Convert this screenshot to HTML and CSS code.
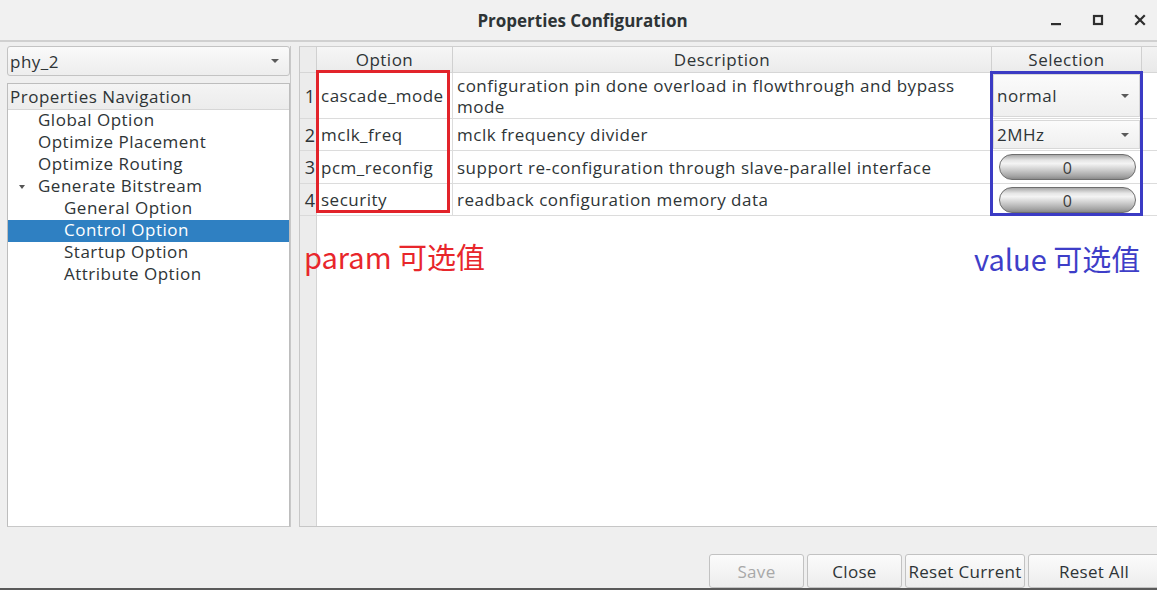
FILE: index.html
```html
<!DOCTYPE html>
<html>
<head>
<meta charset="utf-8">
<link rel="stylesheet" href="styles.css">
</head>
<body>
<div class="window">
  <div class="titlebar">
    <div class="title">Properties Configuration</div>
    <div class="winctrls">
      <svg class="wc" width="14" height="14" viewBox="0 0 14 14"><rect x="2" y="10" width="10" height="2.2" fill="#2e2e2e"/></svg>
      <svg class="wc" width="14" height="14" viewBox="0 0 14 14"><rect x="3" y="3" width="8" height="8" fill="none" stroke="#2e2e2e" stroke-width="2.2"/></svg>
      <svg class="wc" width="14" height="14" viewBox="0 0 14 14"><path d="M3 3 L11 11 M11 3 L3 11" stroke="#2e2e2e" stroke-width="2.2" stroke-linecap="square"/></svg>
    </div>
  </div>

  <div class="main">
    <div class="leftcol">
      <div class="combo top-combo">
        <span>phy_2</span>
        <span class="arrow"></span>
      </div>
      <div class="tree">
        <div class="tree-head">Properties Navigation</div>
        <div class="tree-item l1">Global Option</div>
        <div class="tree-item l1">Optimize Placement</div>
        <div class="tree-item l1">Optimize Routing</div>
        <div class="tree-item l1 expander"><span class="tri"></span>Generate Bitstream</div>
        <div class="tree-item l2">General Option</div>
        <div class="tree-item l2 selected">Control Option</div>
        <div class="tree-item l2">Startup Option</div>
        <div class="tree-item l2">Attribute Option</div>
      </div>
    </div>

    <div class="splitter"></div>

    <div class="rightcol">
      <div class="grid">
        <div class="hcell corner"></div>
        <div class="hcell">Option</div>
        <div class="hcell">Description</div>
        <div class="hcell">Selection</div>
        <div class="hcell filler"></div>

        <div class="rnum r1">1</div>
        <div class="cell opt r1">cascade_mode</div>
        <div class="cell r1 desc wrap">configuration pin done overload in flowthrough and bypass mode</div>
        <div class="cell r1 sel"><div class="combo cellcombo"><span>normal</span><span class="arrow"></span></div></div>
        <div class="cell r1 blank"></div>

        <div class="rnum">2</div>
        <div class="cell opt">mclk_freq</div>
        <div class="cell desc">mclk frequency divider</div>
        <div class="cell sel"><div class="combo cellcombo"><span>2MHz</span><span class="arrow"></span></div></div>
        <div class="cell blank"></div>

        <div class="rnum">3</div>
        <div class="cell opt">pcm_reconfig</div>
        <div class="cell desc">support re-configuration through slave-parallel interface</div>
        <div class="cell sel"><div class="pill">0</div></div>
        <div class="cell blank"></div>

        <div class="rnum">4</div>
        <div class="cell opt">security</div>
        <div class="cell desc">readback configuration memory data</div>
        <div class="cell sel"><div class="pill">0</div></div>
        <div class="cell blank"></div>

        <div class="rnum rest"></div>
        <div class="rest-body"></div>
      </div>
    </div>
  </div>

  <div class="buttonbar">
    <button class="btn disabled">Save</button>
    <button class="btn">Close</button>
    <button class="btn wide">Reset Current</button>
    <button class="btn last">Reset All</button>
  </div>
  <div class="bottomline"></div>

  <div class="anno-box red-box"></div>
  <div class="anno-text red-text">param 可选值</div>
  <div class="anno-box blue-box"></div>
  <div class="anno-text blue-text">value 可选值</div>
</div>
</body>
</html>
```

FILE: styles.css
```css
html, body {
  margin: 0;
  padding: 0;
  width: 1157px;
  height: 590px;
  overflow: hidden;
  background: #efefef;
  font-family: "Open Sans", "Noto Sans", "Noto Sans CJK SC", sans-serif;
  font-size: 17px;
  letter-spacing: 0.5px;
  color: #2e3436;
}

.window {
  position: relative;
  width: 1157px;
  height: 590px;
  display: flex;
  flex-direction: column;
}

.titlebar {
  height: 40px;
  background: #f1f1f1;
  border-bottom: 2px solid #d0d0d0;
  display: flex;
  align-items: center;
  justify-content: center;
  position: relative;
  flex: none;
}

.title {
  font-weight: bold;
  font-size: 17px;
  letter-spacing: 0;
  color: #2e3436;
  margin-left: 8px;
}

.winctrls {
  position: absolute;
  right: 10px;
  top: 13px;
  display: flex;
  gap: 28px;
}

.main {
  flex: 1;
  display: flex;
  padding: 4px 0 0 7px;
  min-height: 0;
}

.leftcol {
  width: 283px;
  display: flex;
  flex-direction: column;
  gap: 7px;
}

.combo {
  display: flex;
  align-items: center;
  justify-content: space-between;
  background: linear-gradient(#fafafa, #ededed);
  border: 1px solid #c3c3c3;
  border-radius: 3px;
  box-sizing: border-box;
}

.top-combo {
  height: 30px;
  padding: 0 10px 0 2px;
}

.arrow {
  width: 0;
  height: 0;
  border-left: 4px solid transparent;
  border-right: 4px solid transparent;
  border-top: 4px solid #5a5a5a;
}

.tree {
  flex: 1;
  background: #fff;
  border: 1px solid #bdbdbd;
  border-bottom-color: #c8c8c8;
}

.tree-head {
  height: 25px;
  line-height: 25px;
  padding-left: 2px;
  background: linear-gradient(#f4f4f4, #ececec);
  border-bottom: 1px solid #d6d6d6;
}

.tree-item {
  height: 22px;
  line-height: 20px;
  white-space: nowrap;
}

.l1 { padding-left: 30px; }
.l2 { padding-left: 56px; }

.expander {
  position: relative;
}
.tri {
  position: absolute;
  left: 11px;
  top: 9px;
  border-left: 3.5px solid transparent;
  border-right: 3.5px solid transparent;
  border-top: 4px solid #555;
}

.selected {
  background: #2f80c2;
  color: #ffffff;
}

.splitter {
  width: 8px;
  flex: none;
  border-left: 1px solid #c8c8c8;
}

.rightcol {
  flex: 1;
  display: flex;
  flex-direction: column;
  min-width: 0;
}

.grid {
  flex: 1;
  display: grid;
  grid-template-columns: 17px 136px 539px 150px 1fr;
  grid-template-rows: 26px 46px 32px 33px 32px 1fr;
  background: #fff;
  border-left: 1px solid #c8c8c8;
  border-top: 1px solid #cfcfcf;
  border-bottom: 1px solid #c6c6c6;
}

.hcell {
  background: linear-gradient(#f6f6f6, #ebebeb);
  border-right: 1px solid #d0d0d0;
  border-bottom: 1px solid #d6d6d6;
  text-align: center;
  line-height: 25px;
}
.hcell.corner { background: #ececec; }
.hcell.filler { border-right: none; background: linear-gradient(#f3f3f3, #e9e9e9); }

.rnum {
  background: #ececec;
  border-right: 1px solid #d4d4d4;
  border-bottom: 1px solid #dadada;
  padding-right: 1px;
  display: flex;
  align-items: center;
  justify-content: flex-end;
  letter-spacing: 0;
  font-size: 18px;
}
.rnum.rest {
  border-bottom: none;
}
.rest-body {
  grid-column: 2 / 6;
  background: #fff;
}

.cell {
  border-right: 1px solid #dcdcdc;
  border-bottom: 1px solid #dcdcdc;
  display: flex;
  align-items: center;
  padding: 0 1px;
  white-space: nowrap;
  overflow: hidden;
}
.cell.opt {
  padding-left: 4px;
}
.cell.desc {
  padding-left: 4px;
}
.cell.wrap {
  white-space: normal;
  line-height: 21px;
  padding-right: 30px;
}
.cell.blank {
  border-right: none;
}
.cell.sel {
  padding: 1px 2px 1px 1px;
  border-right: none;
}

.cellcombo {
  width: 100%;
  height: 100%;
  padding: 0 10px 0 3px;
  border-radius: 0;
  border-color: #d8d8d8;
  background: linear-gradient(#fbfbfb, #efefef);
}

.pill {
  width: 137px;
  height: 26px;
  margin-left: 6px;
  border-radius: 13px;
  border: 1px solid #6e6e6e;
  background: linear-gradient(#a9a9a9 0%, #e6e6e6 22%, #f4f4f4 36%, #cdcdcd 62%, #a4a4a4 88%, #8a8a8a 100%);
  text-align: center;
  line-height: 26px;
  font-size: 16px;
  color: #3a3a3a;
  box-sizing: border-box;
}

.buttonbar {
  height: 61px;
  flex: none;
  display: flex;
  justify-content: flex-end;
  align-items: flex-end;
  gap: 3px;
}

.btn {
  height: 34px;
  width: 95px;
  font-family: inherit;
  font-size: 17px;
  letter-spacing: 0.3px;
  color: #2e3436;
  background: linear-gradient(#fbfbfb, #ededed);
  border: 1px solid #c2c2c2;
  border-radius: 3px;
  padding: 0;
}
.btn.disabled { color: #a8a8a8; }
.btn.wide { width: 120px; }
.btn.last { width: 132px; margin-right: -3px; }

.bottomline {
  height: 2px;
  background: #5a5a5a;
  flex: none;
}

.anno-box {
  position: absolute;
  box-sizing: border-box;
}
.red-box {
  left: 316px;
  top: 70px;
  width: 134px;
  height: 143px;
  border: 3px solid #e2232a;
}
.blue-box {
  left: 990px;
  top: 71px;
  width: 153px;
  height: 145px;
  border: 3px solid #3b3bc4;
}
.anno-text {
  position: absolute;
  font-family: "Noto Sans CJK SC", sans-serif;
  font-size: 29px;
  line-height: 1;
  letter-spacing: 0;
  white-space: nowrap;
}
.red-text {
  left: 304px;
  top: 242px;
  color: #e8262b;
}
.blue-text {
  left: 974px;
  top: 244px;
  color: #3e3ec8;
}
```
